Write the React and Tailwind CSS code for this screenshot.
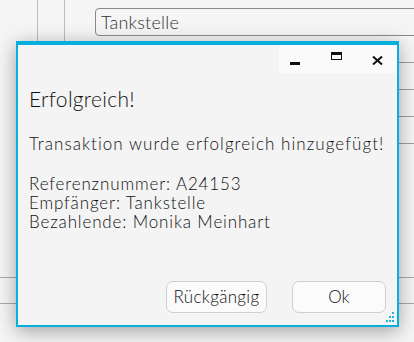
import React from 'react';

const font = { fontFamily: '"Lato", "Open Sans", sans-serif' };

const Grip = () => (
  <svg width="12" height="12" viewBox="0 0 12 12" className="absolute right-[2px] bottom-[2px]">
    {[[9, 1], [6, 5], [9, 5], [3, 9], [6, 9], [9, 9]].map(([x, y], i) => (
      <rect key={i} x={x} y={y} width="2" height="2" fill="#19b5e0" />
    ))}
  </svg>
);

export default function App() {
  return (
    <div className="relative h-[342px] w-[414px] overflow-hidden bg-[#f5f5f5] font-light text-[#111]" style={font}>
      {/* form behind the dialog */}
      <div className="flex h-[277px]">
        <div className="w-[38px] shrink-0 border-r border-[#bdbdbd]" />
        <div className="w-[27px] shrink-0 border-r border-[#bdbdbd]" />
        <div className="flex flex-1 flex-col">
          <div className="-mt-[15px] pl-[30px] text-[17px] leading-[18px] tracking-[0.5px] text-[#333]">Name:</div>
          <div className="ml-[30px] mt-[5px] -mr-[10px] h-[28px] rounded-[4px] border border-[#8a8a8a] pl-[5px] text-[18px] leading-[26px] tracking-[0.2px] text-[#333]">
            Tankstelle
          </div>
          <div className="h-[27px] border-b border-[#9e9e9e]" />
          <div className="h-[27px] border-b border-[#9e9e9e]" />
          <div className="h-[27px] border-b border-[#9e9e9e]" />
          <div className="h-[27px] border-b border-[#9e9e9e]" />
        </div>
      </div>
      <div className="h-[26px] border-t border-[#a8a8a8]" />
      <div className="border-t border-[#a8a8a8]" />

      {/* dialog */}
      <div className="absolute left-[16px] top-[41px] flex h-[286px] w-[383px] flex-col border-x-2 border-b-2 border-t-4 border-[#05b0dc] bg-[#f4f4f4] shadow-[0_4px_18px_rgba(0,0,0,0.35)]">
        <div className="flex h-[28px] justify-end">
          <div className="flex w-[118px] items-center bg-[#fafafa]">
            <div className="ml-[11px] mt-[8px] h-[3px] w-[10px] bg-[#111]" />
            <div className="ml-[31px] -mt-[6px] h-[8px] w-[11px] border border-t-[3px] border-[#111]" />
            <svg width="11" height="9" viewBox="0 0 11 9" className="ml-[30px] mt-[2px]">
              <path d="M1 0.5 L10 8.5 M10 0.5 L1 8.5" stroke="#111" strokeWidth="2" />
            </svg>
          </div>
        </div>
        <div className="flex flex-1 flex-col whitespace-nowrap pl-[11px] pr-[4px]">
          <div className="mt-[13px] text-[21px] leading-[25px] tracking-[0.3px]">Erfolgreich!</div>
          <div className="mt-[23px] text-[17px] leading-[19px]">
            <div className="tracking-[1.05px]">Transaktion wurde erfolgreich hinzugefügt!</div>
            <div className="h-[21px]" />
            <div className="tracking-[0.85px]">Referenznummer: A24153</div>
            <div className="tracking-[0.85px]">Empfänger: Tankstelle</div>
            <div className="tracking-[0.85px]">Bezahlende: Monika Meinhart</div>
          </div>
          <div className="mt-auto mb-[12px] flex justify-end gap-[25px] pr-[7px]">
            <button className="h-[32px] w-[101px] rounded-[7px] border border-[#cfcfcf] bg-[#fbfbfb] text-[17px] font-light tracking-[0.3px] text-[#111]">
              Rückgängig
            </button>
            <button className="h-[32px] w-[94px] rounded-[7px] border border-[#cfcfcf] bg-[#fbfbfb] text-[17px] font-light text-[#111]">
              Ok
            </button>
          </div>
        </div>
        <Grip />
      </div>
    </div>
  );
}
